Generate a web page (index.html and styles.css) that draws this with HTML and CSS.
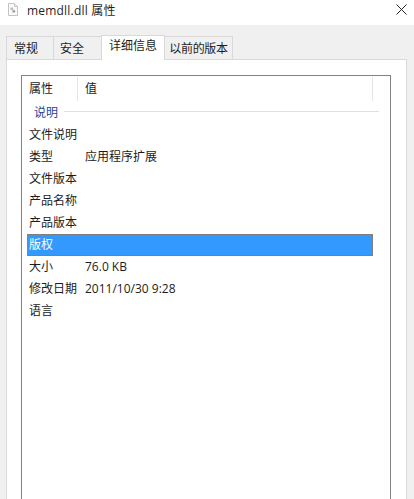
FILE: index.html
```html
<!DOCTYPE html>
<html lang="zh-CN">
<head>
<meta charset="utf-8">
<title>memdll.dll 属性</title>
<link rel="stylesheet" href="styles.css">
</head>
<body>
<div class="window">
  <header class="titlebar">
    <svg class="file-icon" width="10" height="13" viewBox="0 0 10 13" aria-hidden="true">
      <path d="M.5 .5H6.500L9.500 3.500V12.500H.5Z" fill="#fbfbfb" stroke="#c4c4c4"/>
      <path d="M6.500 .5V3.500H9.500" fill="#ececec" stroke="#c4c4c4"/>
      <circle cx="3.800" cy="5.800" r="1.500" fill="#b8bec4"/>
      <circle cx="5.800" cy="8.300" r="1.500" fill="#a2a9b0"/>
    </svg>
    <span class="title">memdll.dll 属性</span>
    <svg class="close" width="11" height="11" viewBox="0 0 11 11" aria-hidden="true">
      <path d="M.5 .5L10.500 10.500M10.500 .5L.5 10.500" stroke="#222" stroke-width="1" fill="none"/>
    </svg>
  </header>
  <div class="body">
    <nav class="tabs">
      <div class="tab first">常规</div>
      <div class="tab second">安全</div>
      <div class="tab active">详细信息</div>
      <div class="tab last">以前的版本</div>
    </nav>
    <section class="panel">
      <div class="list">
        <div class="head">
          <div class="col-a">属性</div>
          <div class="col-b">值</div>
        </div>
        <div class="group"><span class="group-name">说明</span><span class="group-line"></span></div>
        <div class="row"><span class="key">文件说明</span><span class="val"></span></div>
        <div class="row"><span class="key">类型</span><span class="val">应用程序扩展</span></div>
        <div class="row"><span class="key">文件版本</span><span class="val"></span></div>
        <div class="row"><span class="key">产品名称</span><span class="val"></span></div>
        <div class="row"><span class="key">产品版本</span><span class="val"></span></div>
        <div class="row selected"><span class="key">版权</span><span class="val"></span></div>
        <div class="row"><span class="key">大小</span><span class="val">76.0 KB</span></div>
        <div class="row"><span class="key">修改日期</span><span class="val">2011/10/30 9:28</span></div>
        <div class="row"><span class="key">语言</span><span class="val"></span></div>
      </div>
    </section>
  </div>
</div>
</body>
</html>
```
FILE: styles.css
```css
* { box-sizing: border-box; }
html, body { margin: 0; height: 100%; overflow: hidden; }
body {
  font-family: "Open Sans", "Noto Sans CJK SC", sans-serif;
  font-size: 12px;
  color: #1c1c1c;
  background: #f0f0f0;
}
.window { display: flex; flex-direction: column; height: 499px; width: 414px; }
.titlebar {
  height: 25px;
  flex: none;
  background: #fff;
  display: flex;
  align-items: center;
  padding: 0 6px 6px 8px;
}
.file-icon { flex: none; margin-right: 9px; }
.title { flex: 1; font-size: 12px; letter-spacing: .2px; color: #1f1f1f; }
.close { flex: none; margin-right: 1px; }
.body {
  flex: 1;
  display: flex;
  flex-direction: column;
  padding: 11px 7px 0 6px;
  min-height: 0;
}
.tabs { display: flex; height: 23px; flex: none; align-items: flex-end; position: relative; z-index: 1; }
.tab {
  height: 23px;
  line-height: 24px;
  background: #f0f0f0;
  border: 1px solid #d9d9d9;
  border-left: 0;
  border-bottom: 0;
}
.first { width: 48px; padding-left: 7px; border-left: 1px solid #d9d9d9; }
.second { width: 48px; padding-left: 6px; }
.active {
  width: 64px;
  height: 25px;
  line-height: 20px;
  text-align: center;
  background: #fff;
  border-left: 1px solid #d9d9d9;
  margin-left: -1px;
  margin-bottom: -1px;
}
.last { width: 68px; text-align: center; letter-spacing: -.3px; }
.panel {
  flex: 1;
  background: #fff;
  border: 1px solid #d9d9d9;
  border-bottom: 0;
  padding: 15px 15px 0 14px;
  min-height: 0;
}
.list {
  height: 100%;
  border: 1px solid #828282;
  border-bottom: 0;
  padding: 0 0 0 6px;
}
.head { display: flex; height: 24px; width: 345px; line-height: 24px; padding-top: 1px; }
.col-a { width: 50px; padding-left: 1px; border-right: 1px solid #e5e5e5; flex: none; height: 24px; }
.col-b { flex: 1; padding-left: 7px; border-right: 1px solid #e5e5e5; height: 24px; }
.group { display: flex; height: 24px; align-items: center; }
.group-name { color: #1f3f9a; margin-left: 6px; flex: none; }
.group-line { height: 1px; background: #e0e0e0; width: 315px; margin-left: 6px; margin-top: -2px; }
.row { display: flex; height: 22px; width: 346px; margin-left: -1px; line-height: 22px; padding-left: 2px; }
.key { width: 56px; flex: none; }
.val { flex: 1; }
.selected { background: #3399ff; color: #fff; border-top: 1px solid #7f7f7f; border-right: 1px solid #7f7f7f; border-bottom: 1px solid #7f7f7f; line-height: 20px; }
```
